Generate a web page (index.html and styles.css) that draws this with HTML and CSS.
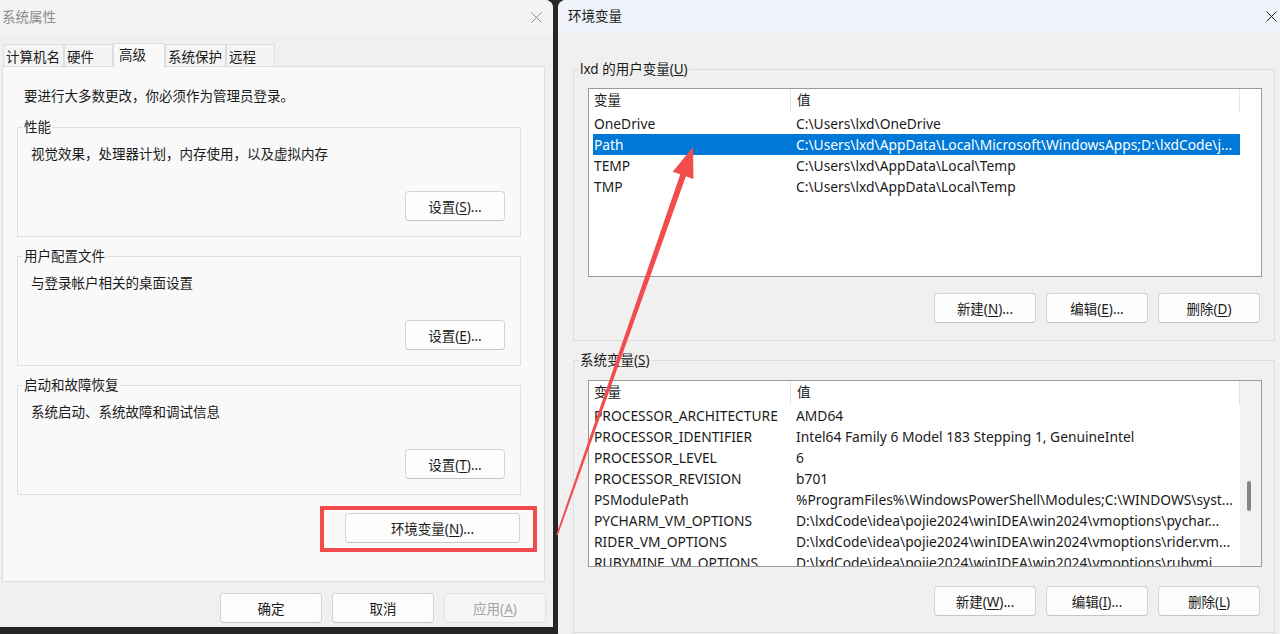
FILE: index.html
```html
<!DOCTYPE html>
<html>
<head>
    <meta charset="utf-8">
    <title>系统属性 - 环境变量</title>
    <link rel="stylesheet" href="styles.css">
</head>
<body>
    <div class="desktop">
        <div class="window sys-props">
            <div class="titlebar">
                <span class="title">系统属性</span>
                <svg class="close" width="11" height="11" viewBox="0 0 11 11"><path d="M0.5 0.5L10.5 10.5M10.5 0.5L0.5 10.5" /></svg>
            </div>
            <div class="tabs">
                <div class="tab">计算机名</div>
                <div class="tab">硬件</div>
                <div class="tab active">高级</div>
                <div class="tab">系统保护</div>
                <div class="tab">远程</div>
            </div>
            <div class="panel">
                <p class="note">要进行大多数更改，你必须作为管理员登录。</p>

                <div class="group">
                    <div class="legend">性能</div>
                    <p class="desc">视觉效果，处理器计划，内存使用，以及虚拟内存</p>
                    <div class="group-actions"><button class="btn small">设置(<u>S</u>)...</button></div>
                </div>

                <div class="group">
                    <div class="legend">用户配置文件</div>
                    <p class="desc">与登录帐户相关的桌面设置</p>
                    <div class="group-actions"><button class="btn small">设置(<u>E</u>)...</button></div>
                </div>

                <div class="group">
                    <div class="legend">启动和故障恢复</div>
                    <p class="desc">系统启动、系统故障和调试信息</p>
                    <div class="group-actions"><button class="btn small">设置(<u>T</u>)...</button></div>
                </div>

                <div class="env-row">
                    <div class="highlight"><button class="btn env-btn">环境变量(<u>N</u>)...</button></div>
                </div>
            </div>
            <div class="dialog-buttons">
                <button class="btn">确定</button>
                <button class="btn">取消</button>
                <button class="btn" disabled>应用(<u>A</u>)</button>
            </div>
        </div>

        <div class="window env-vars">
            <div class="titlebar">
                <span class="title">环境变量</span>
                <svg class="close" width="11" height="11" viewBox="0 0 11 11"><path d="M0.5 0.5L10.5 10.5M10.5 0.5L0.5 10.5" /></svg>
            </div>
            <div class="env-body">
                <div class="group">
                    <div class="legend">lxd 的用户变量(<u>U</u>)</div>
                    <div class="listbox">
                        <div class="list-content">
                            <div class="list-header">
                                <div class="hcell name">变量</div>
                                <div class="hcell value">值</div>
                            </div>
                            <div class="row"><span class="name">OneDrive</span><span class="value">C:\Users\lxd\OneDrive</span></div>
                            <div class="row selected"><span class="name">Path</span><span class="value">C:\Users\lxd\AppData\Local\Microsoft\WindowsApps;D:\lxdCode\j...</span></div>
                            <div class="row"><span class="name">TEMP</span><span class="value">C:\Users\lxd\AppData\Local\Temp</span></div>
                            <div class="row"><span class="name">TMP</span><span class="value">C:\Users\lxd\AppData\Local\Temp</span></div>
                        </div>
                        <div class="list-side"></div>
                    </div>
                    <div class="btn-row">
                        <button class="btn">新建(<u>N</u>)...</button>
                        <button class="btn">编辑(<u>E</u>)...</button>
                        <button class="btn">删除(<u>D</u>)</button>
                    </div>
                </div>

                <div class="group system">
                    <div class="legend">系统变量(<u>S</u>)</div>
                    <div class="listbox">
                        <div class="list-content">
                            <div class="list-header">
                                <div class="hcell name">变量</div>
                                <div class="hcell value">值</div>
                            </div>
                            <div class="row"><span class="name">PROCESSOR_ARCHITECTURE</span><span class="value">AMD64</span></div>
                            <div class="row"><span class="name">PROCESSOR_IDENTIFIER</span><span class="value">Intel64 Family 6 Model 183 Stepping 1, GenuineIntel</span></div>
                            <div class="row"><span class="name">PROCESSOR_LEVEL</span><span class="value">6</span></div>
                            <div class="row"><span class="name">PROCESSOR_REVISION</span><span class="value">b701</span></div>
                            <div class="row"><span class="name">PSModulePath</span><span class="value">%ProgramFiles%\WindowsPowerShell\Modules;C:\WINDOWS\syst...</span></div>
                            <div class="row"><span class="name">PYCHARM_VM_OPTIONS</span><span class="value">D:\lxdCode\idea\pojie2024\winIDEA\win2024\vmoptions\pychar...</span></div>
                            <div class="row"><span class="name">RIDER_VM_OPTIONS</span><span class="value">D:\lxdCode\idea\pojie2024\winIDEA\win2024\vmoptions\rider.vm...</span></div>
                            <div class="row"><span class="name">RUBYMINE_VM_OPTIONS</span><span class="value">D:\lxdCode\idea\pojie2024\winIDEA\win2024\vmoptions\rubymi...</span></div>
                        </div>
                        <div class="list-side scrollbar"><div class="thumb"></div></div>
                    </div>
                    <div class="btn-row">
                        <button class="btn">新建(<u>W</u>)...</button>
                        <button class="btn">编辑(<u>I</u>)...</button>
                        <button class="btn">删除(<u>L</u>)</button>
                    </div>
                </div>
            </div>
        </div>
    </div>

    <!-- red annotation arrow from the button to the Path row -->
    <svg class="arrow" width="1280" height="634" viewBox="0 0 1280 634">
        <polygon points="693,147 693.5,178.9 685.9,176.3 557.8,535.3 556.2,534.7 680.3,174.3 672.7,171.7" />
    </svg>
</body>
</html>
```

FILE: styles.css
```css
body {
    margin: 0;
    background-color: #262626;
    font-family: "Noto Sans", "Noto Sans CJK SC", sans-serif;
    font-size: 13.5px;
    color: #1a1a1a;
    overflow: hidden;
}
p {
    margin: 0;
}
.desktop {
    display: flex;
    gap: 5px;
    width: 1280px;
    height: 634px;
}
.window {
    background-color: #f0f0f0;
    box-sizing: border-box;
    overflow: hidden;
}
.titlebar {
    display: flex;
    justify-content: space-between;
    align-items: center;
}
.close path {
    stroke-width: 1;
    fill: none;
}

/* system properties dialog */
.sys-props {
    width: 553px;
    height: 627px;
    border-radius: 0 8px 0 0;
}
.sys-props .titlebar {
    height: 34px;
    line-height: 34px;
    padding: 0 11px 0 2px;
    background-color: #f3f3f3;
}
.sys-props .title {
    color: #8c8c8c;
}
.sys-props .close path {
    stroke: #8c8c8c;
}
.tabs {
    display: flex;
    align-items: flex-end;
    margin: 9px 0 0 2px;
    width: 543px;
    padding-left: 1px;
    box-sizing: border-box;
    border-bottom: 1px solid #dddddd;
}
.tab {
    box-sizing: border-box;
    min-width: 49px;
    height: 22px;
    padding: 3px 3px 0 2px;
    line-height: 18px;
    border: 1px solid #dedede;
    border-bottom: none;
    background-color: #f4f4f4;
    white-space: nowrap;
}
.tab.active {
    min-width: 52px;
    height: 24px;
    padding: 2px 3px 0 5px;
    margin-bottom: -1px;
    background-color: #f9f9f9;
    border-color: #dddddd;
}
.panel {
    box-sizing: border-box;
    margin-left: 2px;
    width: 543px;
    height: 515px;
    padding: 19px 23px 0 14px;
    background-color: #f9f9f9;
    border: 1px solid #dddddd;
    border-top: none;
}
.note {
    line-height: 20px;
    padding-left: 7px;
}
.group {
    border: 1px solid #e0e0e0;
}
.panel .group {
    margin-top: 19px;
}
.panel .note + .group {
    margin-top: 21px;
}
.legend {
    width: fit-content;
    margin: -10px 0 0 5px;
    padding: 0 1px;
    line-height: 18px;
    background-color: #f9f9f9;
    white-space: nowrap;
}
.desc {
    margin-top: 8px;
    padding-left: 13px;
    line-height: 20px;
}
.group-actions {
    display: flex;
    justify-content: flex-end;
    margin-top: 27px;
    padding: 0 15px 15px 0;
}
.btn {
    box-sizing: border-box;
    width: 102px;
    height: 30px;
    padding: 0;
    font: inherit;
    color: #1a1a1a;
    background-color: #fdfdfd;
    border: 1px solid #d3d3d3;
    border-bottom-color: #c4c4c4;
    border-radius: 4px;
    white-space: nowrap;
}
.btn u {
    text-underline-offset: 2px;
}
.btn.small {
    width: 100px;
}
.btn:disabled {
    color: #a3a3a3;
    background-color: #f6f6f6;
    border-color: #e3e3e3;
}
.env-row {
    display: flex;
    justify-content: flex-end;
    margin: 11px -16px 0 0;
}
.highlight {
    border: 4px solid #f04c4c;
    padding: 3px 13px 5px 21px;
}
.env-btn {
    width: 175px;
}
.dialog-buttons {
    display: flex;
    justify-content: flex-end;
    gap: 10px;
    margin-top: 11px;
    padding-right: 7px;
}

/* environment variables dialog */
.env-vars {
    flex: 1;
    height: 634px;
    border-radius: 8px 0 0 0;
}
.env-vars .titlebar {
    height: 32px;
    line-height: 30px;
    padding: 0 3px 0 10px;
    background-color: #eff2f8;
}
.env-vars .close path {
    stroke: #1a1a1a;
}
.env-body {
    padding: 0 5px 0 15px;
}
.env-body .group {
    border-color: #dcdcdc;
    margin-top: 37px;
}
.env-body .group.system {
    margin-top: 19px;
}
.env-body .legend {
    background-color: #f0f0f0;
}
.listbox {
    display: flex;
    margin: 10px 12px 0 14px;
    height: 189px;
    box-sizing: border-box;
    border: 1px solid #9a9a9a;
    background-color: #ffffff;
    overflow: hidden;
}
.system .listbox {
    margin-top: 11px;
    height: 187px;
}
.list-content {
    width: 651px;
}
.list-side {
    flex: 1;
}
.scrollbar {
    background-color: #f2f2f2;
}
.thumb {
    width: 4px;
    height: 30px;
    margin: 100px 0 0 7px;
    border-radius: 2px;
    background-color: #858585;
}
.list-header {
    display: flex;
    height: 24px;
    line-height: 22px;
}
.hcell {
    box-sizing: border-box;
    border-right: 1px solid #e5e5e5;
    padding-left: 5px;
}
.hcell.name {
    width: 202px;
}
.hcell.value {
    width: 449px;
    padding-left: 6px;
}
.row {
    display: flex;
    width: 647px;
    height: 21px;
    line-height: 21px;
    margin-left: 4px;
    font-size: 13.8px;
    white-space: nowrap;
}
.row .name {
    width: 197px;
    padding-left: 1px;
    box-sizing: border-box;
    overflow: hidden;
}
.row .value {
    flex: 1;
    padding-left: 6px;
    overflow: hidden;
}
.row.selected {
    background-color: #0078d7;
    color: #ffffff;
}
.btn-row {
    display: flex;
    justify-content: flex-end;
    gap: 10px;
    margin-top: 16px;
    padding: 0 14px 17px 0;
}
.system .btn-row {
    margin-top: 19px;
    padding-bottom: 16px;
}

/* annotation overlay */
.arrow {
    position: absolute;
    left: 0;
    top: 0;
    pointer-events: none;
}
.arrow polygon {
    fill: #f24c4c;
}
```
